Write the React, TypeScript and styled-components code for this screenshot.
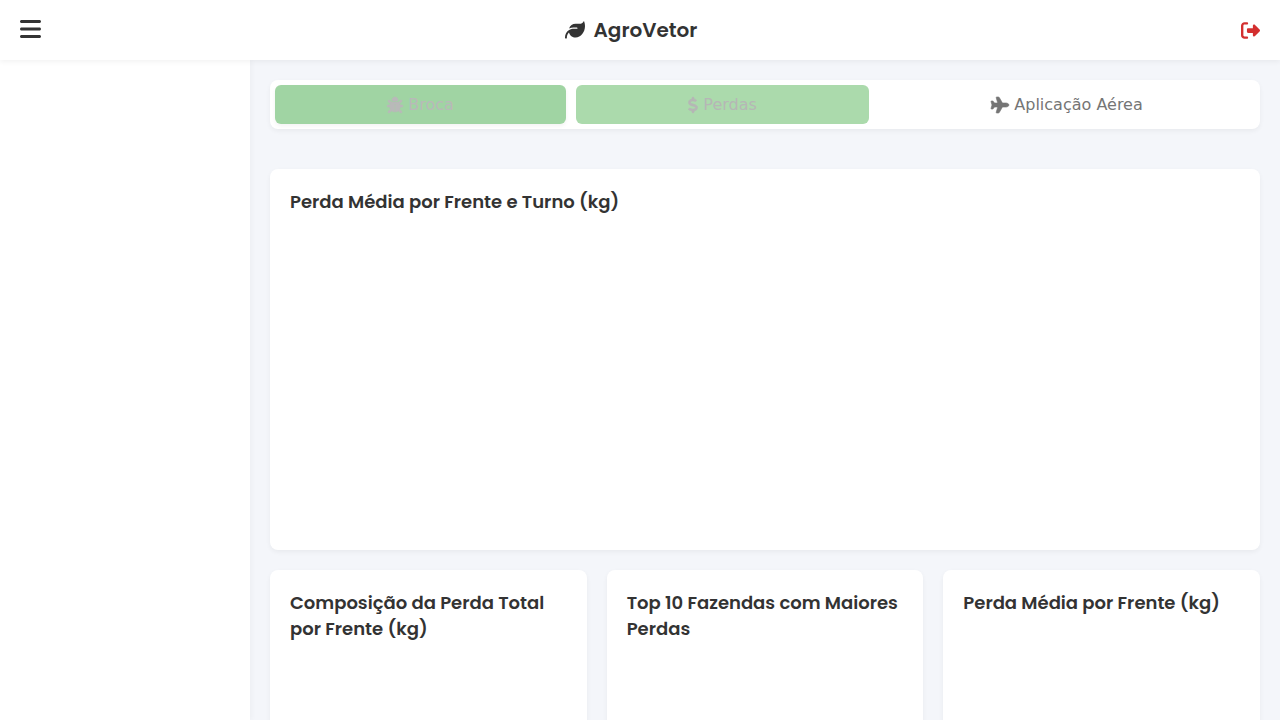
import React from "react";
import styled, { createGlobalStyle } from "styled-components";
import {
  FaBars,
  FaBug,
  FaDollarSign,
  FaLeaf,
  FaPlane,
  FaRightFromBracket,
} from "react-icons/fa6";

const GlobalStyle = createGlobalStyle`
  * { box-sizing: border-box; }
  body {
    margin: 0;
    background: #f4f6fa;
    color: #333333;
    font-family: Poppins, Inter, "Open Sans", sans-serif;
  }
`;

const Page = styled.div`
  display: flex;
  flex-direction: column;
  height: 100vh;
  overflow: hidden;
`;

const Header = styled.header`
  display: flex;
  align-items: center;
  justify-content: space-between;
  flex: none;
  z-index: 2;
  height: 60px;
  padding: 0 20px;
  background: #ffffff;
  box-shadow: 0 2px 5px rgba(0, 0, 0, 0.05);
`;

const IconButton = styled.button<{ $color: string; $size: number; $width: number }>`
  display: flex;
  padding: 0;
  border: 0;
  background: none;
  color: ${(p) => p.$color};
  font-size: ${(p) => p.$size}px;
  cursor: pointer;

  svg {
    width: ${(p) => p.$width}px;
  }
`;

const MenuButton = styled(IconButton)`
  padding-bottom: 2px;
`;

const LogoutButton = styled(IconButton)`
  padding-left: 20px;
`;

const Brand = styled.h1`
  display: flex;
  align-items: center;
  gap: 9px;
  margin: 0;
  font-size: 20px;
  line-height: 30px;
  font-weight: 600;
`;

const Body = styled.div`
  display: flex;
  flex: 1;
  min-height: 0;
`;

const Sidebar = styled.aside`
  flex: none;
  width: 250px;
  background: #ffffff;
  box-shadow: 2px 0 5px rgba(0, 0, 0, 0.03);
`;

const Main = styled.main`
  flex: 1;
  min-width: 0;
  padding: 20px;
  overflow: hidden;
`;

const Tabs = styled.nav`
  display: flex;
  gap: 10px;
  margin-bottom: 40px;
  padding: 5px;
  border-radius: 8px;
  background: #ffffff;
  box-shadow: 0 2px 5px rgba(0, 0, 0, 0.05);
`;

const Tab = styled.button<{
  $fill?: string;
  $color: string;
  $raised?: boolean;
  $iconWidth: number;
}>`
  display: flex;
  flex: 1 1 auto;
  align-items: center;
  justify-content: center;
  gap: 5px;
  padding: 10px 15px;
  border: 0;
  border-radius: 6px;
  background: ${(p) => p.$fill ?? "transparent"};
  box-shadow: ${(p) => (p.$raised ? "0 2px 4px rgba(0, 0, 0, 0.05)" : "none")};
  color: ${(p) => p.$color};
  font-family: "DejaVu Sans", sans-serif;
  font-size: 16px;
  line-height: 19px;
  cursor: pointer;

  svg {
    flex: none;
    width: ${(p) => p.$iconWidth}px;
    overflow: visible;
    stroke-width: 20px;
  }
`;

const Cards = styled.div`
  display: grid;
  grid-template-columns: repeat(3, minmax(0, 1fr));
  gap: 20px;
`;

const Card = styled.section<{ $wide?: boolean }>`
  grid-column: ${(p) => (p.$wide ? "1 / -1" : "auto")};
  padding: 20px;
  border-radius: 8px;
  background: #ffffff;
  box-shadow: 0 2px 5px rgba(0, 0, 0, 0.05);
`;

const CardTitle = styled.h2`
  margin: 0 0 15px;
  font-size: 18px;
  line-height: 26px;
  font-weight: 600;
`;

const ChartArea = styled.div`
  height: 300px;
`;

const charts = [
  { title: "Perda Média por Frente e Turno (kg)", wide: true },
  { title: "Composição da Perda Total por Frente (kg)" },
  { title: "Top 10 Fazendas com Maiores Perdas" },
  { title: "Perda Média por Frente (kg)" },
];

export default function App() {
  return (
    <Page>
      <GlobalStyle />
      <Header>
        <MenuButton $color="#333333" $size={24} $width={21} aria-label="Menu">
          <FaBars />
        </MenuButton>
        <Brand>
          <FaLeaf />
          AgroVetor
        </Brand>
        <LogoutButton $color="#d32f2f" $size={19} $width={19} aria-label="Sair">
          <FaRightFromBracket />
        </LogoutButton>
      </Header>
      <Body>
        <Sidebar />
        <Main>
          <Tabs>
            <Tab $fill="#a0d4a3" $color="#b9b9b9" $iconWidth={16} $raised>
              <FaBug />
              Broca
            </Tab>
            <Tab $fill="#abdaac" $color="#b6b6b6" $iconWidth={10}>
              <FaDollarSign />
              Perdas
            </Tab>
            <Tab $color="#757575" $iconWidth={18}>
              <FaPlane />
              Aplicação Aérea
            </Tab>
          </Tabs>
          <Cards>
            {charts.map((chart) => (
              <Card key={chart.title} $wide={chart.wide}>
                <CardTitle>{chart.title}</CardTitle>
                <ChartArea />
              </Card>
            ))}
          </Cards>
        </Main>
      </Body>
    </Page>
  );
}
